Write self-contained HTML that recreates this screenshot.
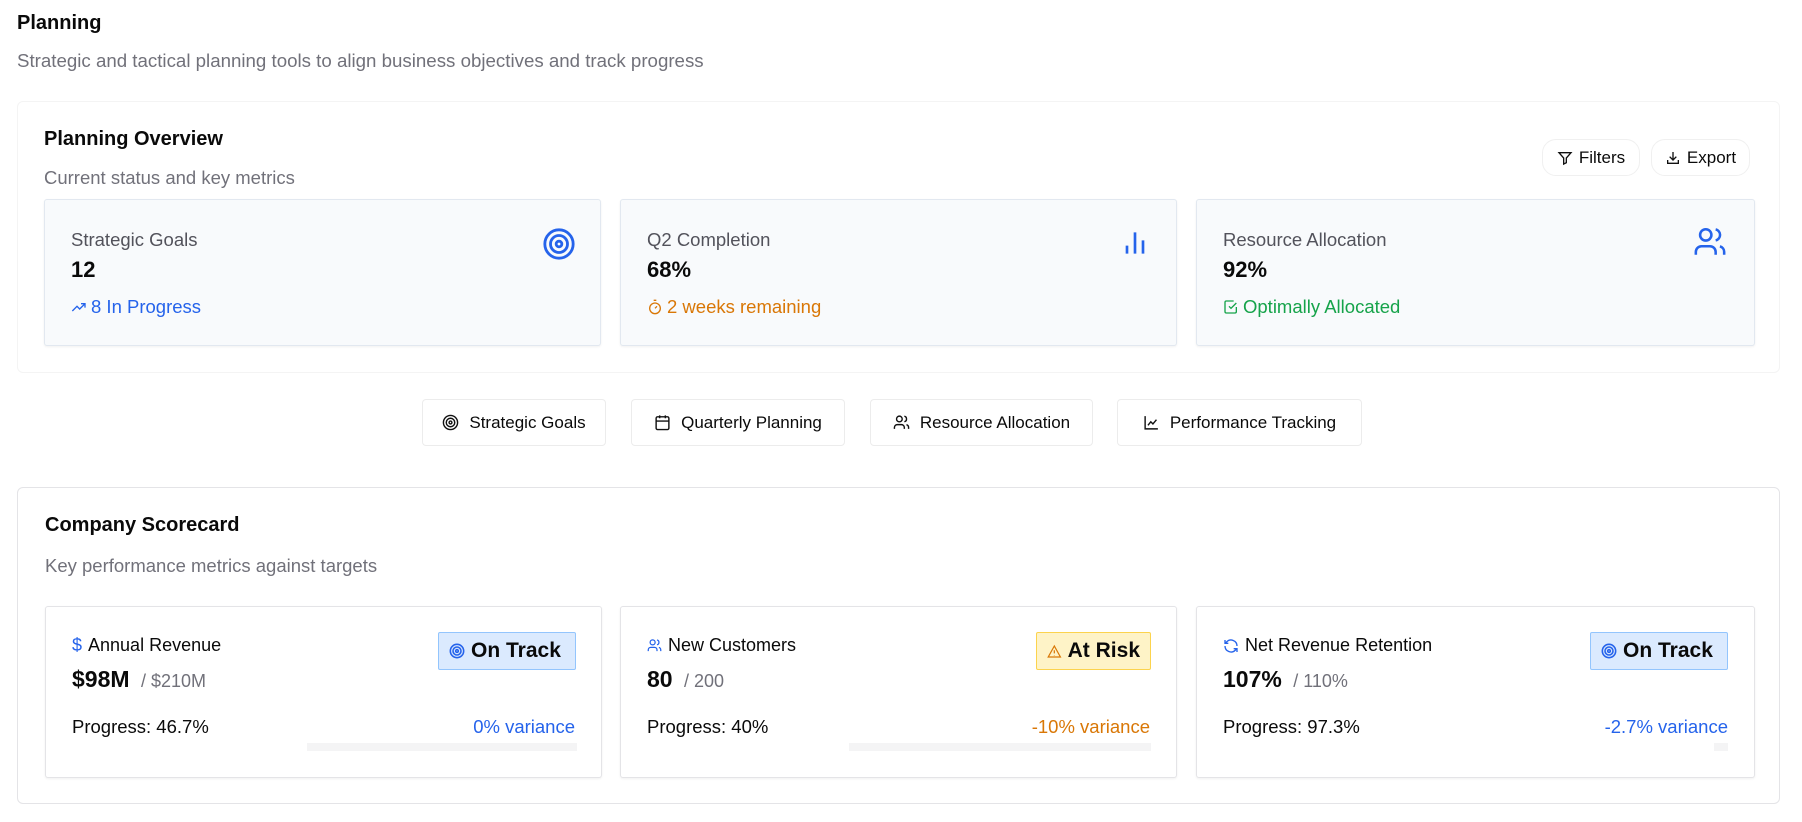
<!DOCTYPE html>
<html><head><meta charset="utf-8"><style>
*{box-sizing:border-box;margin:0;padding:0}
body{width:1802px;height:822px;background:#fff;font-family:"Liberation Sans",sans-serif;color:#0a0a0a;position:relative;overflow:hidden}
.a{position:absolute;white-space:nowrap}
.muted{color:#71717a}
.panel{position:absolute;border:1px solid #ececec;border-radius:6px;background:#fff}
.mc{position:absolute;background:#f8fafc;border:1px solid #e2e8f0;border-radius:3px;box-shadow:0 1px 2px rgba(0,0,0,.06)}
.sc{position:absolute;background:#fff;border:1px solid #e4e4e7;border-radius:3px;box-shadow:0 1px 2px rgba(0,0,0,.06)}
.btn{position:absolute;border:1px solid #f0f0f0;border-radius:14px;background:#fff;font-size:17px;display:flex;align-items:center;justify-content:center;gap:6px}
.tab{position:absolute;top:399px;height:47px;border:1px solid #ececec;border-radius:4px;font-size:17px;display:flex;align-items:center;justify-content:center;gap:10px}
.lbl{font-size:18.5px;color:#52525b}
.val{font-size:22px;font-weight:bold}
.badge{position:absolute;top:25px;height:38px;border-radius:2px;font-size:21px;font-weight:bold;display:flex;align-items:center;gap:6px;padding:0 10px;white-space:nowrap}
svg{display:block}
</style></head><body>
<div class="a" style="left:17px;top:12px;font-size:20px;font-weight:bold">Planning</div>
<div class="a muted" style="left:17px;top:50px;font-size:18.7px">Strategic and tactical planning tools to align business objectives and track progress</div>

<div class="panel" style="left:17px;top:101px;width:1763px;height:272px;border-color:#f4f4f4"></div>
<div class="a" style="left:44px;top:128px;font-size:20px;font-weight:bold">Planning Overview</div>
<div class="a muted" style="left:44px;top:167px;font-size:18.5px">Current status and key metrics</div>
<div class="btn" style="left:1542px;top:139px;width:98px;height:37px"><svg width="16" height="16" viewBox="0 0 24 24" fill="none" stroke="#111" stroke-width="2"><path d="M3 4h18l-7 8v7l-4 2v-9z"/></svg>Filters</div>
<div class="btn" style="left:1651px;top:139px;width:99px;height:37px"><svg width="16" height="16" viewBox="0 0 24 24" fill="none" stroke="#111" stroke-width="2"><path d="M12 3v12M7 10l5 5 5-5M4 15v5h16v-5"/></svg>Export</div>

<div class="mc" style="left:44px;top:199px;width:557px;height:147px">
 <div class="a lbl" style="left:26px;top:29px">Strategic Goals</div>
 <div class="a val" style="left:26px;top:57px">12</div>
 <div class="a" style="left:26px;top:96px;font-size:18.5px;color:#2563eb;display:flex;align-items:center;gap:4px"><svg width="16" height="16" viewBox="0 0 24 24" fill="none" stroke="#2563eb" stroke-width="2"><path d="M2 18l7-7 4 4 8-8M15 7h6v6"/></svg>8 In Progress</div>
 <svg class="a" style="left:497px;top:27px" width="34" height="34" viewBox="0 0 24 24" fill="none" stroke="#2563eb" stroke-width="2"><circle cx="12" cy="12" r="10"/><circle cx="12" cy="12" r="6"/><circle cx="12" cy="12" r="2"/></svg>
</div>
<div class="mc" style="left:620px;top:199px;width:557px;height:147px">
 <div class="a lbl" style="left:26px;top:29px">Q2 Completion</div>
 <div class="a val" style="left:26px;top:57px">68%</div>
 <div class="a" style="left:26px;top:96px;font-size:18.5px;color:#d97706;display:flex;align-items:center;gap:4px"><svg width="16" height="16" viewBox="0 0 24 24" fill="none" stroke="#d97706" stroke-width="2"><circle cx="12" cy="14" r="8"/><path d="M10 2h4M12 14l3-3"/></svg>2 weeks remaining</div>
 <svg class="a" style="left:498px;top:27px" width="32" height="32" viewBox="0 0 24 24" fill="none" stroke="#2563eb" stroke-width="2"><path d="M6 20v-6M12 20V4M18 20v-10"/></svg>
</div>
<div class="mc" style="left:1196px;top:199px;width:559px;height:147px">
 <div class="a lbl" style="left:26px;top:29px">Resource Allocation</div>
 <div class="a val" style="left:26px;top:57px">92%</div>
 <div class="a" style="left:26px;top:96px;font-size:18.5px;color:#16a34a;display:flex;align-items:center;gap:4px"><svg width="16" height="16" viewBox="0 0 24 24" fill="none" stroke="#16a34a" stroke-width="2"><path d="M9 11l3 3 8-8"/><path d="M20 12v7a2 2 0 0 1-2 2H5a2 2 0 0 1-2-2V5a2 2 0 0 1 2-2h11"/></svg>Optimally Allocated</div>
 <svg class="a" style="left:496px;top:25px" width="34" height="34" viewBox="0 0 24 24" fill="none" stroke="#2563eb" stroke-width="1.8"><circle cx="9" cy="7" r="4"/><path d="M2 21v-2a4 4 0 0 1 4-4h6a4 4 0 0 1 4 4v2M16 3.1a4 4 0 0 1 0 7.8M22 21v-2a4 4 0 0 0-3-3.9"/></svg>
</div>

<div class="tab" style="left:422px;width:184px"><svg width="17" height="17" viewBox="0 0 24 24" fill="none" stroke="#111" stroke-width="2"><circle cx="12" cy="12" r="10"/><circle cx="12" cy="12" r="6"/><circle cx="12" cy="12" r="2"/></svg>Strategic Goals</div>
<div class="tab" style="left:631px;width:214px"><svg width="17" height="17" viewBox="0 0 24 24" fill="none" stroke="#111" stroke-width="2"><rect x="3" y="4" width="18" height="18" rx="2"/><path d="M16 2v4M8 2v4M3 10h18"/></svg>Quarterly Planning</div>
<div class="tab" style="left:870px;width:223px"><svg width="17" height="17" viewBox="0 0 24 24" fill="none" stroke="#111" stroke-width="2"><circle cx="9" cy="7" r="4"/><path d="M2 21v-2a4 4 0 0 1 4-4h6a4 4 0 0 1 4 4v2M16 3.1a4 4 0 0 1 0 7.8M22 21v-2a4 4 0 0 0-3-3.9"/></svg>Resource Allocation</div>
<div class="tab" style="left:1117px;width:245px"><svg width="17" height="17" viewBox="0 0 24 24" fill="none" stroke="#111" stroke-width="2"><path d="M3 3v18h18M7 16l4-5 3 3 5-6"/></svg>Performance Tracking</div>

<div class="panel" style="left:17px;top:487px;width:1763px;height:317px;border-color:#e4e4e7"></div>
<div class="a" style="left:45px;top:514px;font-size:20px;font-weight:bold">Company Scorecard</div>
<div class="a muted" style="left:45px;top:555px;font-size:18.5px">Key performance metrics against targets</div>

<div class="sc" style="left:45px;top:606px;width:557px;height:172px">
 <div class="a" style="left:26px;top:28px;font-size:18px;display:flex;align-items:center;gap:6px"><span style="color:#2563eb">$</span>Annual Revenue</div>
 <div class="a" style="left:26px;top:59px;font-size:23px;font-weight:bold">$98M <span style="font-size:18px;font-weight:normal;color:#71717a">&nbsp;/ $210M</span></div>
 <div class="a" style="left:26px;top:109px;font-size:18.5px">Progress: 46.7%</div>
 <div class="a" style="right:26px;top:109px;font-size:18.5px;color:#2563eb">0% variance</div>
 <div class="a" style="left:261px;top:136px;width:270px;height:8px;background:#f4f4f5"></div>
 <div class="badge" style="left:392px;width:138px;background:#dbeafe;border:1px solid #93c5fd"><svg width="16" height="16" viewBox="0 0 24 24" fill="none" stroke="#2563eb" stroke-width="2.4"><circle cx="12" cy="12" r="10"/><circle cx="12" cy="12" r="6"/><circle cx="12" cy="12" r="2"/></svg>On Track</div>
</div>
<div class="sc" style="left:620px;top:606px;width:557px;height:172px">
 <div class="a" style="left:26px;top:28px;font-size:18px;display:flex;align-items:center;gap:6px"><svg width="15" height="15" viewBox="0 0 24 24" fill="none" stroke="#2563eb" stroke-width="2"><circle cx="9" cy="7" r="4"/><path d="M2 21v-2a4 4 0 0 1 4-4h6a4 4 0 0 1 4 4v2M16 3.1a4 4 0 0 1 0 7.8M22 21v-2a4 4 0 0 0-3-3.9"/></svg>New Customers</div>
 <div class="a" style="left:26px;top:59px;font-size:23px;font-weight:bold">80 <span style="font-size:18px;font-weight:normal;color:#71717a">&nbsp;/ 200</span></div>
 <div class="a" style="left:26px;top:109px;font-size:18.5px">Progress: 40%</div>
 <div class="a" style="right:26px;top:109px;font-size:18.5px;color:#d97706">-10% variance</div>
 <div class="a" style="left:228px;top:136px;width:302px;height:8px;background:#f4f4f5"></div>
 <div class="badge" style="left:415px;width:115px;background:#fef3c7;border:1px solid #fcd34d"><svg width="17" height="17" viewBox="0 0 24 24" fill="none" stroke="#d97706" stroke-width="2"><path d="M12 3L2 21h20z M12 10v5M12 18v.5"/></svg>At Risk</div>
</div>
<div class="sc" style="left:1196px;top:606px;width:559px;height:172px">
 <div class="a" style="left:26px;top:28px;font-size:18px;display:flex;align-items:center;gap:6px"><svg width="16" height="16" viewBox="0 0 24 24" fill="none" stroke="#2563eb" stroke-width="2"><path d="M21 12a9 9 0 0 0-15.5-6.2L3 8M3 3v5h5M3 12a9 9 0 0 0 15.5 6.2L21 16M21 21v-5h-5"/></svg>Net Revenue Retention</div>
 <div class="a" style="left:26px;top:59px;font-size:23px;font-weight:bold">107% <span style="font-size:18px;font-weight:normal;color:#71717a">&nbsp;/ 110%</span></div>
 <div class="a" style="left:26px;top:109px;font-size:18.5px">Progress: 97.3%</div>
 <div class="a" style="right:26px;top:109px;font-size:18.5px;color:#2563eb">-2.7% variance</div>
 <div class="a" style="left:517px;top:136px;width:14px;height:8px;background:#f4f4f5"></div>
 <div class="badge" style="left:393px;width:138px;background:#dbeafe;border:1px solid #93c5fd"><svg width="16" height="16" viewBox="0 0 24 24" fill="none" stroke="#2563eb" stroke-width="2.4"><circle cx="12" cy="12" r="10"/><circle cx="12" cy="12" r="6"/><circle cx="12" cy="12" r="2"/></svg>On Track</div>
</div>
</body></html>
